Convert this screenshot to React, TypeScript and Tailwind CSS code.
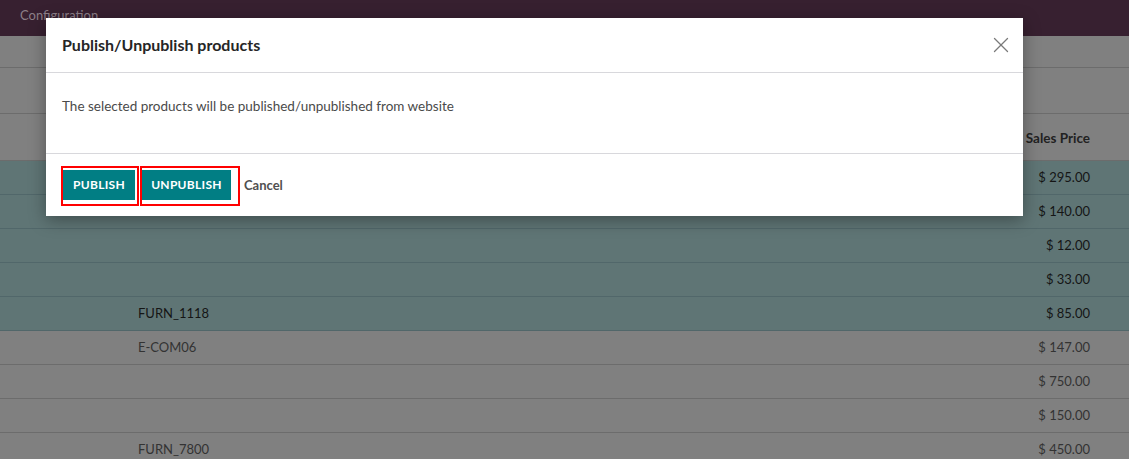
import { X } from "lucide-react";

const rows = [
  { code: "", price: "$ 295.00", selected: true },
  { code: "", price: "$ 140.00", selected: true },
  { code: "", price: "$ 12.00", selected: true },
  { code: "", price: "$ 33.00", selected: true },
  { code: "FURN_1118", price: "$ 85.00", selected: true },
  { code: "E-COM06", price: "$ 147.00", selected: false },
  { code: "", price: "$ 750.00", selected: false },
  { code: "", price: "$ 150.00", selected: false },
  { code: "FURN_7800", price: "$ 450.00", selected: false },
];

const App = () => {
  return (
    <div
      className="relative w-[1129px] h-[459px] overflow-hidden bg-[#808080]"
      style={{ fontFamily: "Lato, 'Noto Sans', sans-serif" }}
    >
      {/* Dimmed page behind the dialog */}
      <div className="h-[36px] bg-[#372030] flex items-center px-5">
        <span className="text-[13px] text-[#8c7f88] -mt-[4px]">Configuration</span>
      </div>
      <div className="h-[32px] border-b border-[#6c6c6c]" />
      <div className="h-[46px] border-b border-[#6c6c6c]" />
      <div className="h-[47px] flex items-center justify-end pr-[39px] pt-[3px] border-b border-[#6c6c6c]">
        <span className="text-[13.5px] font-bold text-[#222]">Sales Price</span>
      </div>
      <div className="flex flex-col">
        {rows.map((r, i) => (
          <div
            key={i}
            className={
              r.selected
                ? "h-[34px] flex items-center bg-[#5f7575] border-b border-[#51676a] text-[#151515]"
                : "h-[34px] flex items-center bg-[#808080] border-b border-[#6c6c6c] text-[#333]"
            }
          >
            <span className="ml-[138px] text-[13px] w-[200px]">{r.code}</span>
            <span className="ml-auto mr-[39px] text-[13px]">{r.price}</span>
          </div>
        ))}
      </div>

      {/* Modal dialog */}
      <div className="absolute left-[46px] top-[18px] w-[977px] bg-white shadow-[0_4px_16px_rgba(0,0,0,0.35)]">
        <div className="h-[55px] flex items-center justify-between pl-4 pr-[9px] border-b border-[#d8d8dc]">
          <h4 className="text-[16px] font-bold text-[#262626]">Publish/Unpublish products</h4>
          <X size={26} strokeWidth={1.2} className="text-[#7a7a7a]" />
        </div>
        <div className="h-[81px] flex items-center pl-4 pb-[13px] border-b border-[#d8d8dc]">
          <p className="text-[13.5px] text-[#4a4a4a]">
            The selected products will be published/unpublished from website
          </p>
        </div>
        <div className="h-[62px] flex items-center pl-[15px] pt-[2px]">
          <div className="w-[78px] border-2 border-[#ff0000] pt-[2px] pb-[4px]">
            <button className="h-[30px] w-[72px] bg-[#017e84] text-white text-[12px] font-bold tracking-wide">
              PUBLISH
            </button>
          </div>
          <div className="ml-[1px] w-[100px] border-2 border-[#ff0000] pt-[2px] pb-[4px]">
            <button className="h-[30px] w-[89px] bg-[#017e84] text-white text-[12px] font-bold tracking-wide">
              UNPUBLISH
            </button>
          </div>
          <button className="ml-[4px] text-[13px] font-bold text-[#505050]">Cancel</button>
        </div>
      </div>
    </div>
  );
};

export default App;
